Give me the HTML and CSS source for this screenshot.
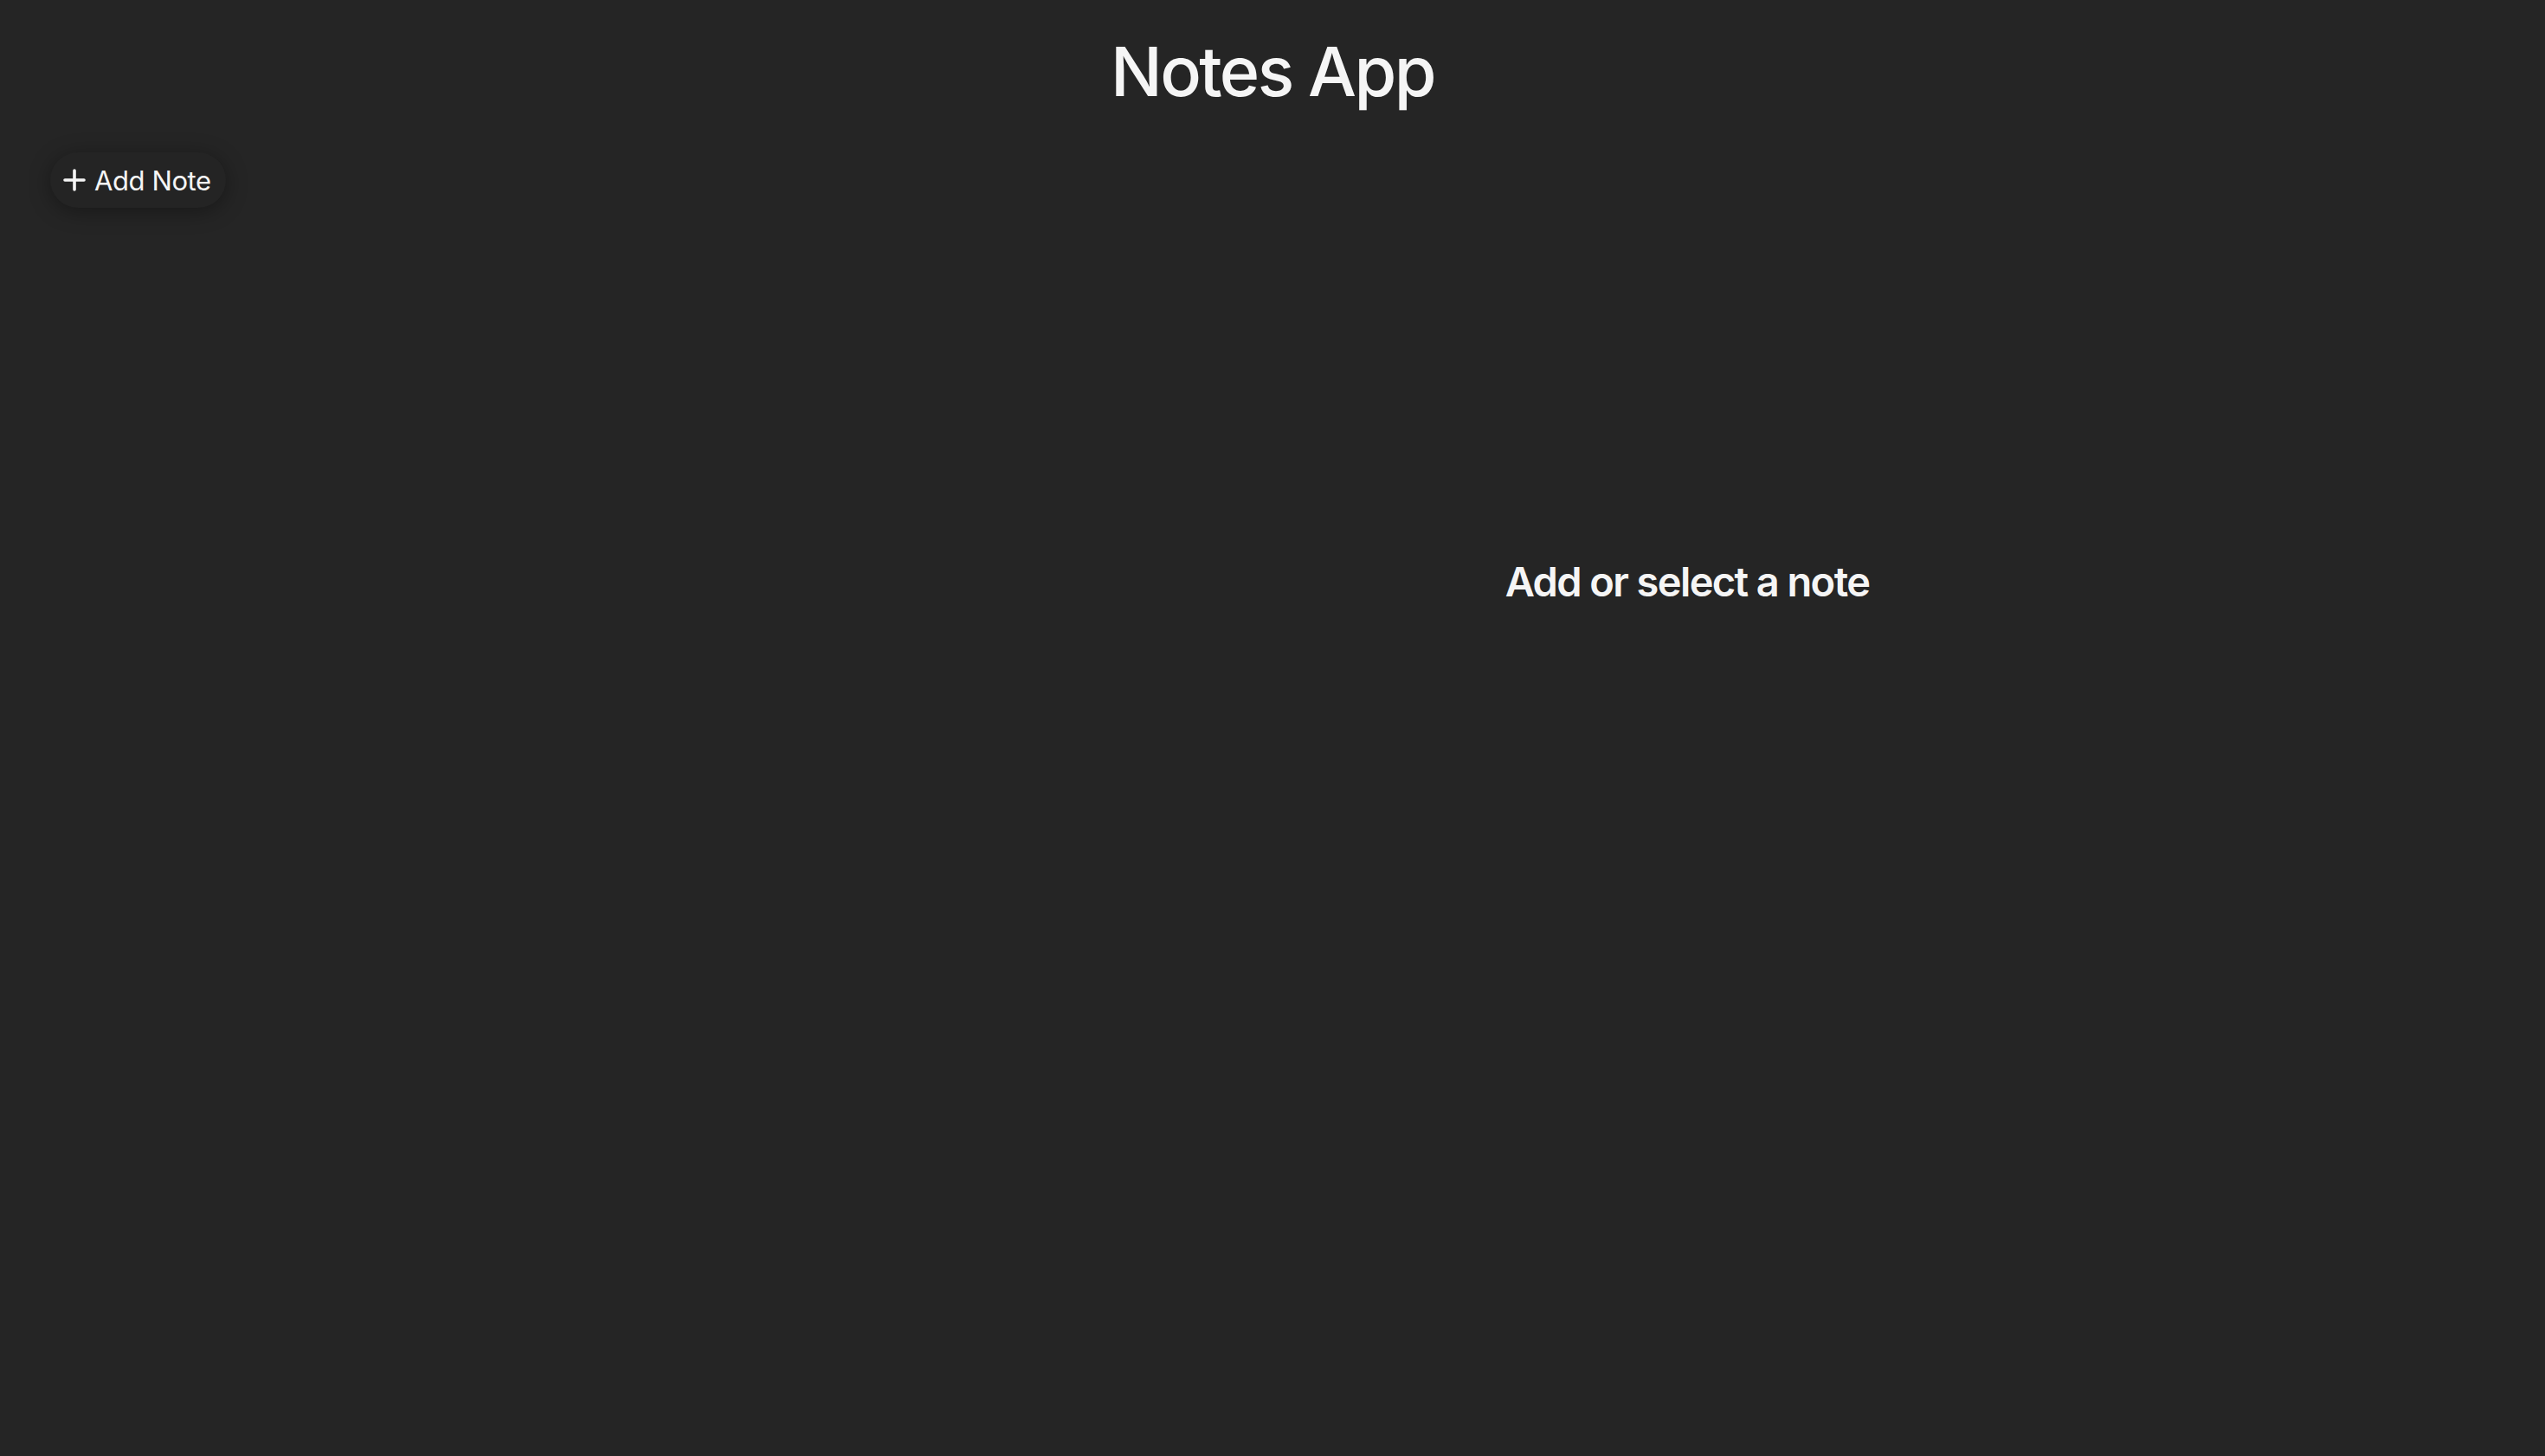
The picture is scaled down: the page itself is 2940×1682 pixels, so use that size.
FILE: index.html
```html
<!DOCTYPE html>
<html lang="en">
<head>
<meta charset="utf-8">
<title>Notes App</title>
<link rel="stylesheet" href="styles.css">
</head>
<body>
<header class="app-header">
  <h1 class="app-title">Notes App</h1>
</header>
<div class="app-body">
  <aside class="sidebar">
    <button class="add-btn" type="button">
      <svg class="add-icon" viewBox="0 0 26 26" width="26" height="26" aria-hidden="true">
        <path d="M13 2 V24 M2 13 H24" stroke="#f5f5f5" stroke-width="3.6" stroke-linecap="round" fill="none"/>
      </svg>
      <span>Add Note</span>
    </button>
  </aside>
  <main class="editor">
    <h2 class="empty-msg">Add or select a note</h2>
  </main>
</div>
</body>
</html>
```

FILE: styles.css
```css
html, body {
  margin: 0;
  padding: 0;
  background: #252525;
  color: #f5f5f5;
  font-family: Inter, "Noto Sans", "Liberation Sans", sans-serif;
  height: 100%;
}

.app-header {
  display: flex;
  justify-content: center;
  padding-top: 28px;
}

.app-title {
  margin: 0;
  font-size: 79px;
  font-weight: 500;
  line-height: 108px;
  letter-spacing: -2.6px;
}

.app-body {
  display: flex;
  padding-top: 40px;
}

.sidebar {
  width: 958px;
  flex: 0 0 958px;
  padding-left: 58px;
  box-sizing: border-box;
}

.add-btn {
  display: flex;
  align-items: center;
  gap: 10px;
  height: 64px;
  padding: 0 17px 0 15px;
  border: none;
  border-radius: 32px;
  background: #242424;
  color: #f5f5f5;
  font-family: inherit;
  font-size: 31px;
  font-weight: 400;
  letter-spacing: -0.4px;
  box-shadow: 0 4px 24px rgba(0, 0, 0, 0.35);
  cursor: pointer;
}

.add-icon {
  display: block;
}

.editor {
  flex: 1;
  display: flex;
  justify-content: center;
  padding-top: 466px;
}

.empty-msg {
  margin: 0;
  font-size: 47px;
  font-weight: 600;
  line-height: 60px;
  letter-spacing: -1.6px;
}
```
